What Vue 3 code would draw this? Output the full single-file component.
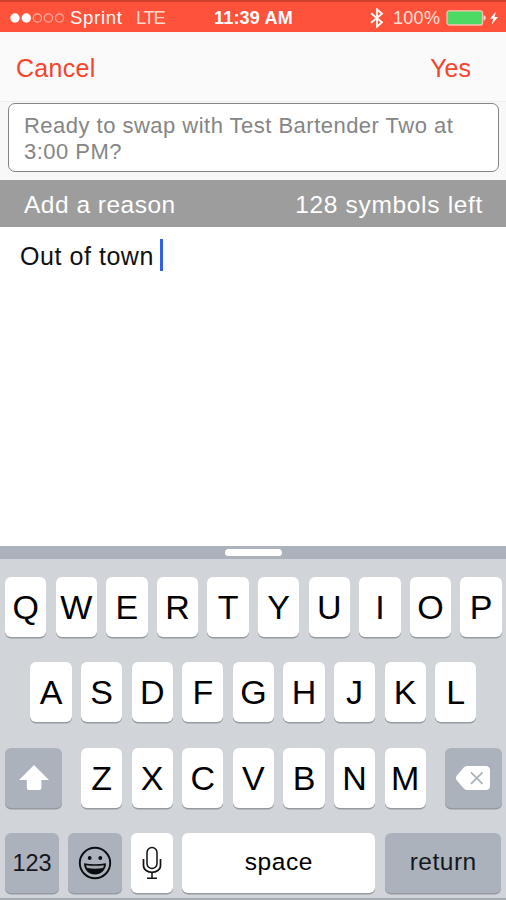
<script setup>
import { ref } from 'vue'

const reason = ref('Out of town')
const rows = ['QWERTYUIOP', 'ASDFGHJKL', 'ZXCVBNM'].map((r) => r.split(''))
</script>

<template>
  <div class="screen">
    <header class="status">
      <svg class="signal" width="56" height="12" viewBox="0 0 56 12">
        <circle cx="5" cy="6" r="4.7" fill="#fff" />
        <circle cx="16.3" cy="6" r="4.7" fill="#fff" />
        <g fill="none" stroke="#ffb3a5" stroke-width="1.2">
          <circle cx="27.4" cy="6" r="4.1" />
          <circle cx="38.4" cy="6" r="4.1" />
          <circle cx="49.5" cy="6" r="4.1" />
        </g>
      </svg>
      <span class="carrier">Sprint</span>
      <span class="network">LTE</span>
      <span class="time">11:39 AM</span>
      <svg class="bluetooth" width="14" height="20" viewBox="0 0 14 20">
        <path d="M1 5.2 12 14.2 7 18.7V1.3l5 4.5L1 14.8" fill="none" stroke="#fff" stroke-width="1.8" />
      </svg>
      <span class="percent">100%</span>
      <svg class="battery" width="52" height="18" viewBox="0 0 52 18">
        <rect x="1" y="1.8" width="35.5" height="14.2" rx="2" fill="#4cd964" stroke="#ffc0b2" stroke-width="1.3" />
        <path d="M37.5 6.3c3 .4 3 4.8 0 5.2z" fill="#ffd6cc" />
        <path d="M50 2.5 44 9.7h3.2L45.7 15.5 52 7.9h-3.5z" fill="#fff" />
      </svg>
    </header>

    <nav class="nav">
      <span class="cancel">Cancel</span>
      <span class="yes">Yes</span>
    </nav>

    <section class="prompt-area">
      <div class="prompt">Ready to swap with Test Bartender Two at<br />3:00 PM?</div>
    </section>

    <div class="reason-bar">
      <span class="add">Add a reason</span>
      <span class="left">128 symbols left</span>
    </div>

    <main class="editor">
      <span class="typed">{{ reason }}</span><i class="caret"></i>
    </main>

    <section class="keyboard">
      <div class="handle-bar"><i class="handle"></i></div>
      <div class="keys">
        <div class="row">
          <div v-for="k in rows[0]" :key="k" class="key">{{ k }}</div>
        </div>
        <div class="row">
          <div v-for="k in rows[1]" :key="k" class="key">{{ k }}</div>
        </div>
        <div class="row spread">
          <div class="key dark side">
            <svg width="32" height="28" viewBox="0 0 32 28">
              <path d="M16 1 31 16h-7.6v8q0 2-2 2H10.8q-2 0-2-2V16H1z" fill="#fff" />
            </svg>
          </div>
          <div class="letters">
            <div v-for="k in rows[2]" :key="k" class="key">{{ k }}</div>
          </div>
          <div class="key dark side">
            <svg width="36" height="27" viewBox="0 0 36 27">
              <path d="M12 1h18.5q4.500 0 4.500 4.500v15q0 4.500-4.500 4.500H12q-2 0-3.500-1.700L1.500 15q-1.500-2 0-4L8.500 2.700Q10 1 12 1z" fill="#fff" />
              <path d="M16 7.300 27.500 18.900M27.500 7.300 16 18.900" stroke="#abb2bc" stroke-width="1.800" />
            </svg>
          </div>
        </div>
        <div class="row spread">
          <div class="key dark mode numbers">123</div>
          <div class="key dark mode emoji">
            <svg width="34" height="34" viewBox="0 0 34 34">
              <circle cx="17" cy="17" r="15.200" fill="none" stroke="#0a0c0f" stroke-width="1.900" />
              <circle cx="11.700" cy="12" r="1.900" fill="#0a0c0f" />
              <circle cx="22.300" cy="12" r="1.900" fill="#0a0c0f" />
              <path d="M6 17.300q11 1.800 22 0C28 24 23 28.600 17 28.600S6 24 6 17.300z" fill="#0a0c0f" />
              <path d="M8 19.200q9 1.100 18 0l-1 2.800q-8 1.600-16 0z" fill="#a3a9b2" />
            </svg>
          </div>
          <div class="key mic">
            <svg width="20" height="34" viewBox="0 0 20 34" fill="none" stroke="#111">
              <rect x="5" y="1.500" width="10" height="21" rx="5" stroke-width="1.500" />
              <path d="M1.500 13v6.500c0 9 17 9 17 0V13" stroke-width="1.700" />
              <path d="M10 26.500V32M5 32.200h10" stroke-width="1.500" />
            </svg>
          </div>
          <div class="key space">space</div>
          <div class="key dark return">return</div>
        </div>
      </div>
    </section>
  </div>
</template>

<style>
body {
  margin: 0;
}
</style>

<style scoped>
.screen {
  width: 506px;
  height: 900px;
  display: flex;
  flex-direction: column;
  overflow: hidden;
  background: #fff;
  font-family: 'Liberation Sans', Arial, sans-serif;
  white-space: nowrap;
}
.screen svg {
  display: block;
  flex: none;
}
.status {
  box-sizing: border-box;
  height: 32px;
  flex: none;
  display: flex;
  align-items: center;
  padding: 2px 0 0 10px;
  border-top: 2px solid #cf412c;
  background: #ff523a;
  color: #fff;
  font-size: 18.5px;
  line-height: 22px;
}
.carrier {
  width: 66px;
  margin-left: 4px;
  letter-spacing: 0.7px;
}
.network {
  width: 78px;
  color: #ffd6cd;
  letter-spacing: -1.3px;
}
.time {
  width: 156px;
  font-weight: bold;
  font-size: 18px;
  letter-spacing: 0.2px;
}
.percent {
  width: 50px;
  margin-left: 9px;
  color: #ffe0d9;
  font-size: 18px;
  letter-spacing: 0.3px;
}
.battery {
  margin-left: 3px;
}
.nav {
  box-sizing: border-box;
  height: 69px;
  flex: none;
  display: flex;
  justify-content: space-between;
  padding: 21px 35px 0 16px;
  background: #fafafa;
  color: #f8432c;
  font-size: 25px;
  line-height: 30px;
}
.cancel {
  letter-spacing: 0.3px;
}
.prompt-area {
  box-sizing: border-box;
  height: 79px;
  flex: none;
  padding: 1px 7px 0 8px;
  border-top: 1px solid #eee;
  background: #f8f8f8;
}
.prompt {
  box-sizing: border-box;
  height: 69px;
  border: 1.5px solid #858585;
  border-radius: 7px;
  padding: 9px 0 0 15px;
  background: #fff;
  color: #858585;
  font-size: 22px;
  line-height: 26px;
  letter-spacing: 0.48px;
}
.reason-bar {
  height: 47px;
  flex: none;
  display: flex;
  justify-content: space-between;
  padding: 0 23px 0 24px;
  background: #9d9d9d;
  color: #fff;
  font-size: 24.5px;
  line-height: 49px;
  letter-spacing: 0.5px;
}
.left {
  letter-spacing: 0.67px;
}
.editor {
  height: 319px;
  flex: none;
  display: flex;
  padding-left: 20px;
  color: #111;
  font-size: 25px;
  line-height: 58px;
  letter-spacing: 0.55px;
}
.caret {
  width: 3px;
  height: 32px;
  margin: 12px 0 0 6px;
  background: #2f60ea;
}
.keyboard {
  box-sizing: border-box;
  height: 354px;
  flex: none;
  background: #d1d5da;
  border-bottom: 2px solid #a4aab2;
}
.handle-bar {
  height: 13px;
  display: flex;
  align-items: center;
  justify-content: center;
  background: #abb2bb;
}
.handle {
  width: 57px;
  height: 7px;
  border-radius: 3.5px;
  background: #fff;
}
.keys {
  display: flex;
  flex-direction: column;
  gap: 25.5px;
  padding: 17.9px 4.5px 0 5.3px;
}
.row {
  display: flex;
  justify-content: center;
  gap: 9.3px;
}
.spread {
  justify-content: space-between;
}
.letters {
  display: flex;
  gap: 9.3px;
}
.key {
  box-sizing: border-box;
  width: 41.3px;
  height: 60px;
  flex: none;
  display: flex;
  align-items: center;
  justify-content: center;
  border-radius: 6px;
  background: #fff;
  box-shadow: 0 1.5px 0 #969ba2;
  color: #000;
  font-size: 34px;
  padding-top: 1px;
}
.dark {
  background: #abb2bc;
  color: #14171b;
}
.side {
  width: 56.5px;
}
.mode {
  width: 53.5px;
}
.numbers {
  font-size: 23.5px;
}
.emoji {
  padding: 0;
}
.mic {
  padding: 0;
}
.space {
  width: 193px;
  padding: 0 0 3px;
  font-size: 24.5px;
  letter-spacing: 0.6px;
}
.return {
  width: 116.5px;
  padding: 0 0 3px;
  font-size: 24.5px;
  letter-spacing: 0.5px;
}
</style>
